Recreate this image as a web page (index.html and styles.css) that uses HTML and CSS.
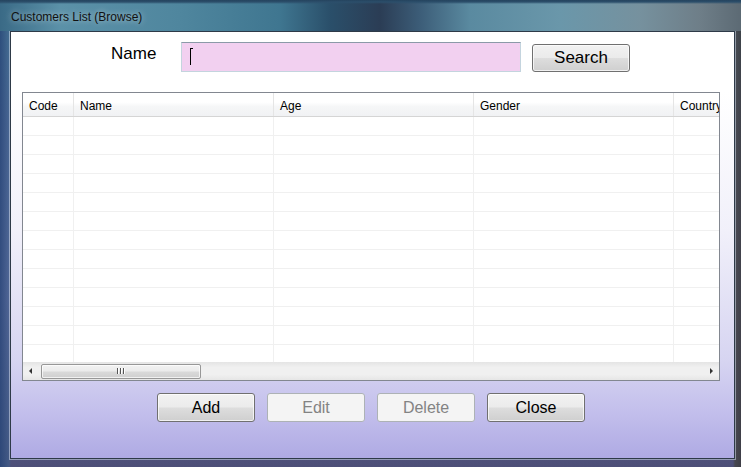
FILE: index.html
```html
<!DOCTYPE html>
<html>
<head>
<meta charset="utf-8">
<link rel="stylesheet" href="styles.css">
</head>
<body>
<div class="window">
  <div class="titlebar"><span class="title">Customers List (Browse)</span></div>
  <div class="client">
    <div class="search-row">
      <label class="name-label">Name</label>
      <div class="name-input"><span class="caret"></span></div>
      <button class="btn btn-search">Search</button>
    </div>
    <div class="grid">
      <div class="grid-head">
        <div class="hc c1">Code</div>
        <div class="hc c2">Name</div>
        <div class="hc c3">Age</div>
        <div class="hc c4">Gender</div>
        <div class="hc c5">Country</div>
      </div>
      <div class="grid-body">
        <div class="row"><div class="c1"></div><div class="c2"></div><div class="c3"></div><div class="c4"></div><div class="c5"></div></div>
        <div class="row"><div class="c1"></div><div class="c2"></div><div class="c3"></div><div class="c4"></div><div class="c5"></div></div>
        <div class="row"><div class="c1"></div><div class="c2"></div><div class="c3"></div><div class="c4"></div><div class="c5"></div></div>
        <div class="row"><div class="c1"></div><div class="c2"></div><div class="c3"></div><div class="c4"></div><div class="c5"></div></div>
        <div class="row"><div class="c1"></div><div class="c2"></div><div class="c3"></div><div class="c4"></div><div class="c5"></div></div>
        <div class="row"><div class="c1"></div><div class="c2"></div><div class="c3"></div><div class="c4"></div><div class="c5"></div></div>
        <div class="row"><div class="c1"></div><div class="c2"></div><div class="c3"></div><div class="c4"></div><div class="c5"></div></div>
        <div class="row"><div class="c1"></div><div class="c2"></div><div class="c3"></div><div class="c4"></div><div class="c5"></div></div>
        <div class="row"><div class="c1"></div><div class="c2"></div><div class="c3"></div><div class="c4"></div><div class="c5"></div></div>
        <div class="row"><div class="c1"></div><div class="c2"></div><div class="c3"></div><div class="c4"></div><div class="c5"></div></div>
        <div class="row"><div class="c1"></div><div class="c2"></div><div class="c3"></div><div class="c4"></div><div class="c5"></div></div>
        <div class="row"><div class="c1"></div><div class="c2"></div><div class="c3"></div><div class="c4"></div><div class="c5"></div></div>
        <div class="row"><div class="c1"></div><div class="c2"></div><div class="c3"></div><div class="c4"></div><div class="c5"></div></div>
        <div class="row"><div class="c1"></div><div class="c2"></div><div class="c3"></div><div class="c4"></div><div class="c5"></div></div>
      </div>
      <div class="hscroll">
        <div class="arrow arrow-left"></div>
        <div class="track">
          <div class="thumb"><span class="grip"></span><span class="grip"></span><span class="grip"></span></div>
        </div>
        <div class="arrow arrow-right"></div>
      </div>
    </div>
    <div class="actions">
      <button class="btn btn-action">Add</button>
      <button class="btn btn-action" disabled>Edit</button>
      <button class="btn btn-action" disabled>Delete</button>
      <button class="btn btn-action">Close</button>
    </div>
  </div>
</div>
</body>
</html>
```

FILE: styles.css
```css
html, body {
  margin: 0;
  padding: 0;
  width: 741px;
  height: 467px;
  overflow: hidden;
}

.window {
  width: 741px;
  height: 467px;
  display: flex;
  flex-direction: column;
  background:
    linear-gradient(90deg, rgba(40,70,120,0.85) 0px, rgba(60,95,140,0.6) 9px, rgba(0,0,0,0) 11px, rgba(0,0,0,0) 733px, rgba(70,70,75,0.9) 735px, rgba(60,60,65,0.9) 741px),
    linear-gradient(180deg, #5e93a9 0px, #4d7f98 31px, #5a6f9c 120px, #6d6fa3 300px, #4d4f78 467px);
  font-family: "Liberation Sans", Arial, sans-serif;
}

.titlebar {
  height: 31px;
  flex: none;
  position: relative;
  background:
    linear-gradient(180deg, #25445e 0px, #2c4f6b 2px, rgba(0,0,0,0) 4px),
    linear-gradient(90deg, #3a6a86 0px, #5b91a8 60px, #4f869e 180px, #3f7690 280px, #2a4f6a 330px, #2b3d55 380px, #3c5d78 420px, #5a8aa0 470px, #6a97aa 560px, #76919e 640px, #6e7e88 700px, #5c6a74 741px);
}

.title {
  position: absolute;
  left: 11px;
  top: 10px;
  font-size: 12px;
  color: #111;
  font-family: "Liberation Sans", Arial, sans-serif;
  text-shadow: 0 0 6px rgba(255,255,255,0.6);
}

.client {
  margin: 0 6px 8px 10px;
  flex: 1;
  box-sizing: border-box;
  border: 1px solid #2e3a48;
  box-shadow: 0 0 0 1px rgba(210,220,235,0.55);
  background: linear-gradient(180deg, #ffffff 0px, #ffffff 60px, #f1f0fa 200px, #d6d4f1 330px, #c3bfec 380px, #aea9e3 428px);
  display: flex;
  flex-direction: column;
}

.search-row {
  display: flex;
  align-items: center;
  height: 30px;
  margin-top: 10px;
  padding-left: 100px;
}

.name-label {
  font-size: 17px;
  color: #000;
  width: 70px;
  margin-top: -6px;
}

.name-input {
  width: 340px;
  height: 30px;
  box-sizing: border-box;
  background: #f2d0f0;
  border: 1px solid #c4d4de;
  border-top-color: #8b9aa8;
  position: relative;
}

.caret {
  position: absolute;
  left: 8px;
  top: 5px;
  width: 1px;
  height: 17px;
  background: #000;
}
.caret::before {
  content: "";
  position: absolute;
  left: 0;
  top: 0;
  width: 3px;
  height: 1px;
  background: #000;
}

.btn {
  font-family: "Liberation Sans", Arial, sans-serif;
  box-sizing: border-box;
  border: 1px solid #707070;
  border-radius: 3px;
  background: linear-gradient(180deg, #f2f2f2 0%, #ebebeb 48%, #dddddd 52%, #cfcfcf 100%);
  box-shadow: inset 0 0 0 1px rgba(255,255,255,0.7);
  color: #000;
  padding: 0;
}

.btn-search {
  width: 98px;
  height: 28px;
  margin-left: 11px;
  font-size: 17px;
  margin-top: 2px;
}

.grid {
  margin: 20px 0 0 11px;
  width: 698px;
  height: 289px;
  box-sizing: border-box;
  border: 1px solid #828790;
  background: #fff;
  display: flex;
  flex-direction: column;
  overflow: hidden;
}

.grid-head {
  display: flex;
  height: 24px;
  flex: none;
  box-sizing: border-box;
  border-bottom: 1px solid #d5d5d5;
  background: linear-gradient(180deg, #ffffff 0%, #ffffff 40%, #f5f6f7 60%, #f1f2f4 100%);
}

.hc {
  box-sizing: border-box;
  font-size: 12px;
  color: #000;
  padding: 6px 0 0 6px;
  border-right: 1px solid #e5e5e5;
  white-space: nowrap;
  overflow: hidden;
  flex: none;
}

.c1 { width: 51px; }
.c2 { width: 200px; }
.c3 { width: 200px; }
.c4 { width: 200px; }
.c5 { width: 200px; }

.grid-body {
  flex: 1;
  overflow: hidden;
}

.row {
  display: flex;
  height: 19px;
  box-sizing: border-box;
  border-bottom: 1px solid #f0f0f0;
}
.row > div {
  flex: none;
  box-sizing: border-box;
  border-right: 1px solid #f0f0f0;
}

.hscroll {
  height: 18px;
  flex: none;
  display: flex;
  align-items: center;
  background: linear-gradient(180deg, #e4e4e4 0%, #f0f0f0 30%, #f0f0f0 70%, #e6e6e6 100%);
}

.arrow {
  width: 17px;
  height: 18px;
  flex: none;
  position: relative;
}
.arrow::after {
  content: "";
  position: absolute;
  top: 6px;
  width: 0;
  height: 0;
  border-top: 3px solid transparent;
  border-bottom: 3px solid transparent;
}
.arrow-left::after {
  left: 6px;
  border-right: 3px solid #333;
}
.arrow-right::after {
  left: 8px;
  border-left: 3px solid #333;
}

.track {
  flex: 1;
  height: 18px;
  display: flex;
  align-items: center;
}

.thumb {
  width: 160px;
  height: 15px;
  margin-left: 1px;
  box-sizing: border-box;
  border: 1px solid #979797;
  border-radius: 2px;
  background: linear-gradient(180deg, #f2f2f2 0%, #ebebeb 48%, #dadada 52%, #cfcfcf 100%);
  box-shadow: inset 0 0 0 1px rgba(255,255,255,0.7);
  display: flex;
  justify-content: center;
  align-items: center;
  gap: 1px;
}

.grip {
  width: 1px;
  height: 6px;
  background: #555;
  box-shadow: 1px 0 0 #fff;
  margin-right: 1px;
}

.actions {
  display: flex;
  gap: 12px;
  margin: 12px 0 0 146px;
}

.btn-action {
  width: 98px;
  height: 29px;
  font-size: 16px;
}

.btn-action:disabled {
  background: #f4f4f4;
  border-color: #adb2b5;
  color: #838383;
  box-shadow: none;
}
```
